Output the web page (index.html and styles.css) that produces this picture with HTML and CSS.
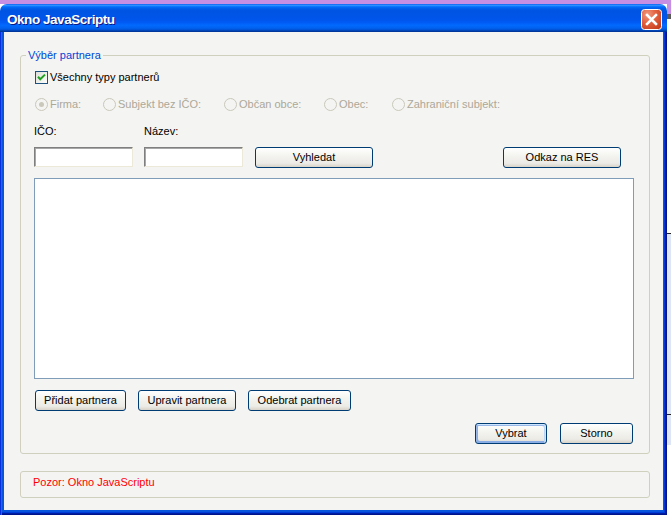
FILE: index.html
```html
<!DOCTYPE html>
<html lang="cs">
<head>
<meta charset="utf-8">
<title>Okno JavaScriptu</title>
<link rel="stylesheet" href="styles.css">
</head>
<body>
<div class="desktop">
  <div class="window">
    <div class="titlebar">
      <span class="title">Okno JavaScriptu</span>
      <span class="close" aria-label="Zavřít">
        <svg width="21" height="21" viewBox="0 0 21 21">
          <defs>
            <radialGradient id="cg" cx="0.3" cy="0.25" r="0.95">
              <stop offset="0" stop-color="#f09a80"/>
              <stop offset="0.45" stop-color="#e2613f"/>
              <stop offset="1" stop-color="#c23a18"/>
            </radialGradient>
          </defs>
          <rect x="0.5" y="0.5" width="20" height="20" rx="3" fill="url(#cg)" stroke="#ffffff"/>
          <path d="M6 6 L15 15 M15 6 L6 15" stroke="#ffffff" stroke-width="2.5" stroke-linecap="square"/>
        </svg>
      </span>
    </div>
    <div class="frame">
      <div class="client">
        <fieldset class="group">
          <legend>Výběr partnera</legend>
          <div class="group-body">
            <div class="row check-row">
              <span class="checkbox">
                <svg width="13" height="13" viewBox="0 0 13 13">
                  <defs>
                    <linearGradient id="cb" x1="0" y1="0" x2="1" y2="1">
                      <stop offset="0" stop-color="#dcdcd7"/>
                      <stop offset="1" stop-color="#ffffff"/>
                    </linearGradient>
                  </defs>
                  <rect x="0.5" y="0.5" width="12" height="12" fill="url(#cb)" stroke="#1c5180"/>
                  <path d="M3 5.8 L5.2 8.2 L10 3.6" fill="none" stroke="#21a121" stroke-width="2"/>
                </svg>
              </span>
              <span>Všechny typy partnerů</span>
            </div>
            <div class="row radio-row">
              <span class="radio-item r-firma"><span class="radio checked"></span>Firma:</span>
              <span class="radio-item r-subjekt"><span class="radio"></span>Subjekt bez IČO:</span>
              <span class="radio-item r-obcan"><span class="radio"></span>Občan obce:</span>
              <span class="radio-item r-obec"><span class="radio"></span>Obec:</span>
              <span class="radio-item"><span class="radio"></span>Zahraniční subjekt:</span>
            </div>
            <div class="row labels-row">
              <span class="label-ico">IČO:</span>
              <span>Název:</span>
            </div>
            <div class="row inputs-row">
              <input class="field" type="text">
              <input class="field" type="text">
              <button class="btn btn-search">Vyhledat</button>
              <button class="btn btn-res">Odkaz na RES</button>
            </div>
            <div class="list"></div>
            <div class="row actions-row">
              <button class="btn btn-add">Přidat partnera</button>
              <button class="btn btn-edit">Upravit partnera</button>
              <button class="btn btn-remove">Odebrat partnera</button>
            </div>
            <div class="row dialog-row">
              <button class="btn btn-ok default">Vybrat</button>
              <button class="btn btn-cancel">Storno</button>
            </div>
          </div>
        </fieldset>
        <div class="status">Pozor: Okno JavaScriptu</div>
      </div>
    </div>
  </div>
  <div class="behind"></div>
</div>
</body>
</html>
```
FILE: styles.css
```css
* { box-sizing: border-box; }
html, body { margin: 0; padding: 0; }
body {
  width: 671px;
  height: 522px;
  overflow: hidden;
  background: #ffffff;
  font-family: "Liberation Sans", Arial, sans-serif;
  font-size: 11px;
  color: #000;
}
.desktop {
  display: flex;
  height: 522px;
  background: linear-gradient(#c68fe4 0 4px, #ffffff 4px);
}
.window {
  flex: none;
  margin-top: 4px;
  width: 667px;
  height: 511px;
  display: flex;
  flex-direction: column;
  border-radius: 7px 7px 0 0;
  overflow: hidden;
}
.titlebar {
  flex: none;
  height: 28px;
  display: flex;
  align-items: flex-start;
  padding-left: 7px;
  background: linear-gradient(180deg, #0058ee 0%, #3593ff 4%, #288eff 6%, #127dff 8%, #036ffc 10%, #0262ee 14%, #0057e5 20%, #0054e3 24%, #0055eb 56%, #005bf5 66%, #026afe 76%, #0062ef 86%, #0052d6 92%, #0040ab 96%, #003092 100%);
}
.title {
  margin-top: 8px;
  color: #ffffff;
  font: bold 13.5px/16px "Liberation Sans", Arial, sans-serif;
  letter-spacing: -0.45px;
  text-shadow: 1px 1px #0a1883;
}
.close {
  display: flex;
  width: 21px;
  height: 21px;
  margin: 5px 5px 0 auto;
}
.frame {
  flex: 1;
  display: flex;
  padding: 0 4px 5px 4px;
  background: #0855dd;
  box-shadow: inset 1px 0 #0831d9, inset 2px 0 #166aee, inset -1px -1px #00138c, inset -2px -2px #001ea0, inset -3px -3px #003bda;
}
.client {
  flex: 1;
  display: flex;
  flex-direction: column;
  background: #f4f4f2;
}
.group {
  margin: 17px 13px 0 16px;
  padding: 0;
  min-width: 0;
  border: 1px solid #d0d0bf;
  border-radius: 3px;
}
.group legend {
  margin-left: 5px;
  padding: 0 2px;
  line-height: 13px;
  color: #0046d5;
}
.group-body {
  display: flex;
  flex-direction: column;
  padding: 0 15px 9px 13px;
}
.row {
  display: flex;
  align-items: center;
  line-height: 13px;
}
.check-row {
  margin-top: 9px;
  height: 13px;
  gap: 2px;
}
.checkbox {
  display: flex;
  margin-left: 1px;
}
.radio-row {
  margin-top: 14px;
  height: 13px;
  color: #aca899;
  padding-left: 1px;
}
.radio-item {
  display: flex;
  align-items: center;
  gap: 2px;
  white-space: nowrap;
}
.r-firma { width: 68px; }
.r-subjekt { width: 121px; }
.r-obcan { width: 100px; }
.r-obec { width: 68px; }
.radio {
  flex: none;
  width: 13px;
  height: 13px;
  border: 1px solid #cac8bb;
  border-radius: 50%;
  background: #f4f4f2;
  display: flex;
  align-items: center;
  justify-content: center;
}
.radio.checked::after {
  content: "";
  width: 5px;
  height: 5px;
  border-radius: 50%;
  background: #cac8bb;
}
.labels-row {
  margin-top: 14px;
  height: 13px;
}
.label-ico { width: 110px; }
.inputs-row {
  margin-top: 9px;
  align-items: flex-start;
  height: 21px;
}
.field {
  width: 99px;
  height: 20px;
  margin: 0 11px 0 0;
  padding: 0;
  border: 1px solid;
  border-color: #7f7f7f #ece9d8 #ece9d8 #7f7f7f;
  box-shadow: inset 1px 1px #a7a7a7;
  background: #ffffff;
}
.field + .field { margin-right: 12px; }
.btn {
  height: 21px;
  margin: 0;
  padding: 0;
  border: 1px solid #003c74;
  border-radius: 3px;
  background: linear-gradient(180deg, #ffffff 0%, #f5f5f1 35%, #ecebe6 80%, #d8d3c9 100%);
  font: 11px/1 "Liberation Sans", Arial, sans-serif;
  color: #000;
}
.btn-search { width: 118px; }
.btn-res { width: 118px; margin-left: auto; margin-right: 13px; }
.list {
  margin-top: 10px;
  height: 201px;
  border: 1px solid #7f9db9;
  background: #ffffff;
}
.actions-row {
  margin-top: 11px;
  gap: 12px;
  padding-left: 1px;
}
.btn-add { width: 91px; }
.btn-edit { width: 98px; }
.btn-remove { width: 103px; }
.dialog-row {
  margin-top: 12px;
  justify-content: flex-end;
  gap: 13px;
  padding-right: 1px;
}
.btn-ok { width: 72px; }
.btn-cancel { width: 73px; }
.btn.default {
  box-shadow: inset -1px 1px #cee7ff, inset 1px 2px #98b8ea, inset -2px 2px #bcd4f6, inset 1px -1px #89ade4, inset 2px -2px #89ade4;
}
.status {
  margin: 17px 13px 0 16px;
  padding: 4px 12px 8px 12px;
  line-height: 13px;
  border: 1px solid #d0d0bf;
  border-radius: 3px;
  color: #ff0000;
}
.behind {
  flex: 1;
  background:
    linear-gradient(#c68fe4 0 14px, #5a5a5a 14px 19px, #ffffff 19px 233px, #222 233px 234px, #dde5f7 234px 414px, #222 414px 415px, #dde5f7 415px 445px, #ffffff 445px);
}
```
